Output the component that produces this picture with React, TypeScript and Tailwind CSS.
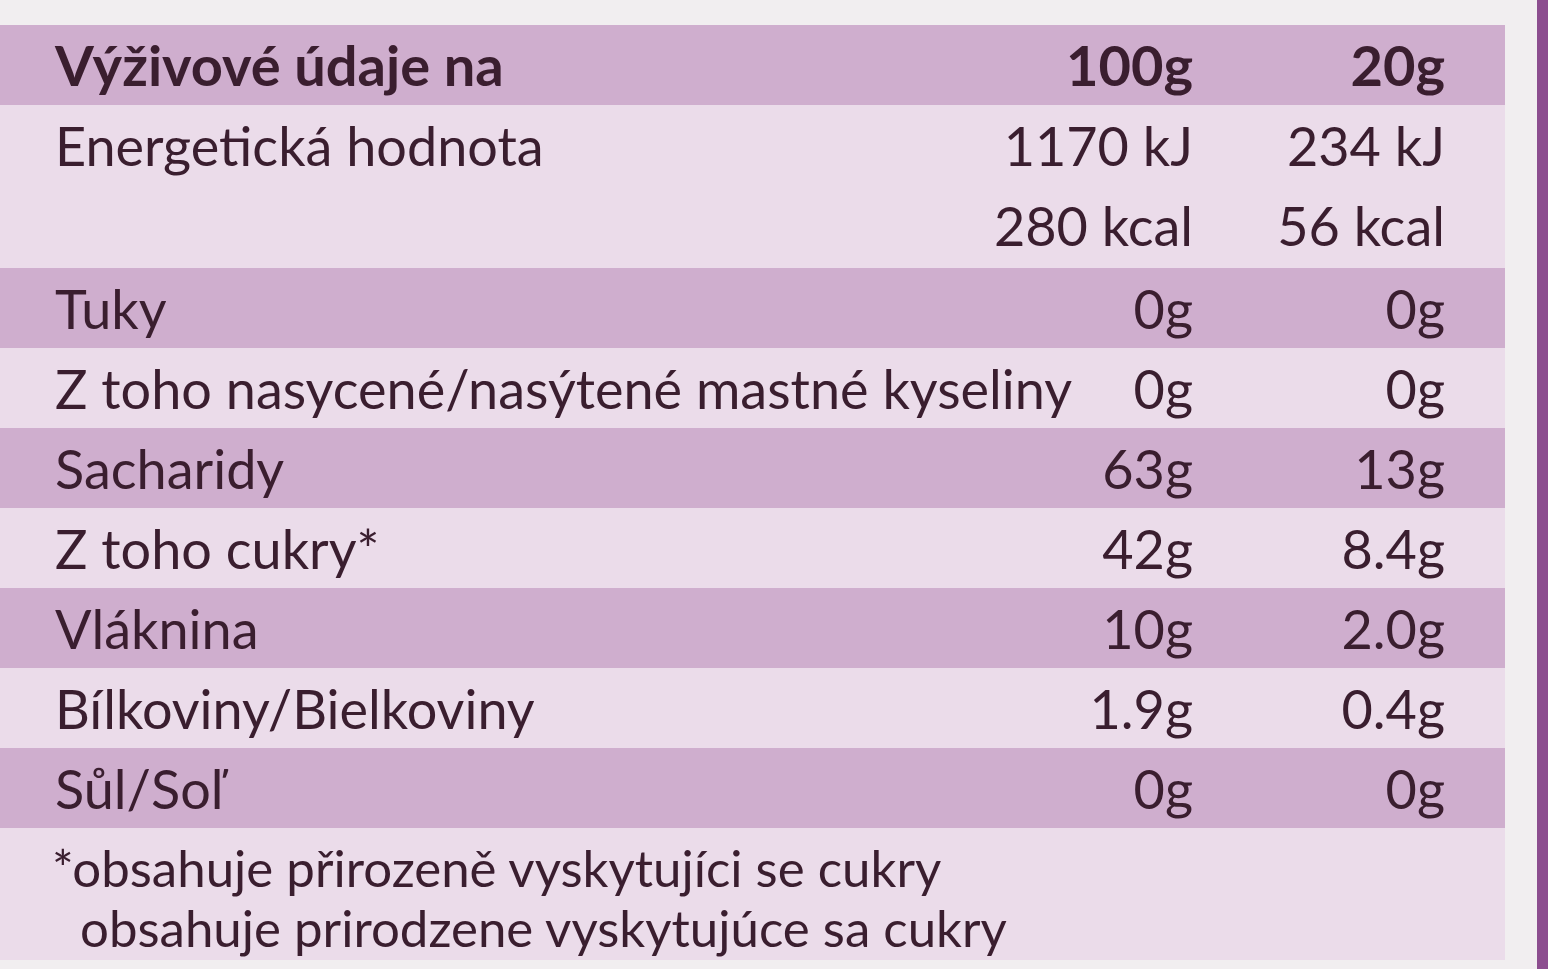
const rows = [
  { label: "Tuky", a: "0g", b: "0g", dark: true },
  { label: "Z toho nasycené/nasýtené mastné kyseliny", a: "0g", b: "0g", dark: false },
  { label: "Sacharidy", a: "63g", b: "13g", dark: true },
  { label: "Z toho cukry*", a: "42g", b: "8.4g", dark: false },
  { label: "Vláknina", a: "10g", b: "2.0g", dark: true },
  { label: "Bílkoviny/Bielkoviny", a: "1.9g", b: "0.4g", dark: false },
  { label: "Sůl/Soľ", a: "0g", b: "0g", dark: true },
];

export default function App() {
  return (
    <div
      className="w-[1548px] h-[969px] overflow-hidden bg-[#f1eef0] flex text-[#3a1e2f]"
      style={{ fontFamily: "Lato, 'Open Sans', sans-serif" }}
    >
      <div className="w-[1505px] pt-[25px] flex flex-col">
        {/* header */}
        <div className="h-[80px] bg-[#cfaece] flex items-center pl-[55px] pr-[60px] text-[56px] font-bold">
          <div className="flex-1">Výživové údaje na</div>
          <div className="w-[200px] text-right">100g</div>
          <div className="w-[252px] text-right">20g</div>
        </div>
        {/* energy */}
        <div className="h-[163px] bg-[#ebdcea] flex pl-[55px] pr-[60px] text-[54px]">
          <div className="flex-1 h-[80px] flex items-center">Energetická hodnota</div>
          <div className="w-[260px] flex flex-col text-right">
            <div className="h-[80px] flex items-center justify-end">1170 kJ</div>
            <div className="h-[80px] flex items-center justify-end">280 kcal</div>
          </div>
          <div className="w-[252px] flex flex-col text-right">
            <div className="h-[80px] flex items-center justify-end">234 kJ</div>
            <div className="h-[80px] flex items-center justify-end">56 kcal</div>
          </div>
        </div>
        {rows.map((r) => (
          <div
            key={r.label}
            className={`h-[80px] flex items-center pl-[55px] pr-[60px] text-[54px] ${
              r.dark ? "bg-[#cfaece]" : "bg-[#ebdcea]"
            }`}
          >
            <div className="flex-1 min-w-0 whitespace-nowrap">{r.label}</div>
            <div className="w-[120px] shrink-0 text-right">{r.a}</div>
            <div className="w-[252px] shrink-0 text-right">{r.b}</div>
          </div>
        ))}
        {/* footnote */}
        <div className="flex-1 bg-[#ebdcea] pl-[52px] pt-[10px] text-[51px] leading-[60px] mb-[9px] whitespace-nowrap">
          <div>*obsahuje přirozeně vyskytujíci se cukry</div>
          <div className="pl-[28px]">obsahuje prirodzene vyskytujúce sa cukry</div>
        </div>
      </div>
      <div className="w-[32px]" />
      <div className="w-[11px] bg-[#8c4d8f]" />
    </div>
  );
}
